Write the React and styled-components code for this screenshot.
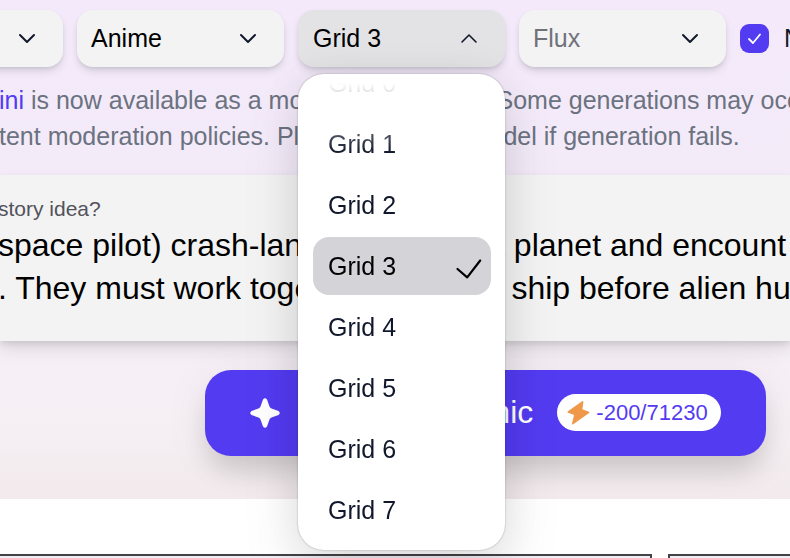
import { useEffect, useRef, useState } from 'react';
import styled, { createGlobalStyle } from 'styled-components';

const GlobalStyle = createGlobalStyle`
  *, *::before, *::after {
    box-sizing: border-box;
  }

  body {
    margin: 0;
    background: #FFFFFF;
    font-family: "Liberation Sans", Arial, Helvetica, sans-serif;
    overflow: hidden;
  }

  button, select, textarea {
    font-family: inherit;
  }
`;

const Page = styled.div`
  height: 100vh;
  display: flex;
  flex-direction: column;
  overflow: hidden;
`;

const Hero = styled.section`
  padding: 10px 0 43px;
  background: linear-gradient(180deg, #F3E9FA 0%, #F4EBF9 36%, #F6F0F5 82%, #F2EAEC 100%);
`;

const Toolbar = styled.div`
  display: flex;
  align-items: center;
  gap: 14px;
  margin-left: -144px;
`;

const Field = styled.div`
  position: relative;
  flex: 0 0 207px;
  color: #11182B;

  > svg {
    position: absolute;
    top: 17px;
    right: 25px;
    pointer-events: none;
  }
`;

const controlShadow = '0 5px 9px -1px rgba(0, 0, 0, 0.12), 0 2px 5px -2px rgba(0, 0, 0, 0.14)';

const Select = styled.select`
  appearance: none;
  display: block;
  width: 100%;
  height: 57px;
  padding: 0 14px 2px;
  border: 0;
  border-radius: 16px;
  background: #F3F3F3;
  box-shadow: ${controlShadow};
  color: ${props => props.$muted ? '#71717A' : '#000000'};
  font-size: 25px;
`;

const Trigger = styled.button`
  display: block;
  width: 100%;
  height: 57px;
  padding: 0 15px;
  border: 0;
  border-radius: 16px;
  background: #E3E3E5;
  box-shadow: ${controlShadow};
  color: #000000;
  font-size: 25px;
  text-align: left;
`;

const Menu = styled.div`
  position: absolute;
  top: 64px;
  left: 0;
  right: 0;
  z-index: 10;
  padding: 9px 14px 11px 15px;
  border-radius: 26px;
  background: #FFFFFF;
  box-shadow: 0 0 40px rgba(0, 0, 0, 0.07), 0 30px 60px rgba(0, 0, 0, 0.1), 0 0 2px rgba(0, 0, 0, 0.3);
`;

const Options = styled.div`
  display: flex;
  flex-direction: column;
  gap: 3px;
  height: 456px;
  overflow-y: auto;
  scrollbar-width: none;
  mask-image: linear-gradient(180deg, transparent 0, #000 70px);
`;

const Option = styled.button`
  flex: none;
  display: flex;
  align-items: center;
  justify-content: space-between;
  height: 58px;
  padding: 0 8px 0 15px;
  border: 0;
  border-radius: 16px;
  background: ${props => props.$active ? '#D4D4D8' : 'transparent'};
  color: ${props => props.$active ? '#000000' : '#11182B'};
  font-size: 25px;
`;

const CheckLabel = styled.label`
  display: flex;
  align-items: center;
  gap: 15px;
  color: #11182B;
  font-size: 25px;
`;

const CheckBox = styled.span`
  position: relative;
  display: grid;
  width: 29px;
  height: 29px;

  input {
    appearance: none;
    width: 29px;
    height: 29px;
    margin: 0;
    border-radius: 9px;
    background: #533BF1;
  }

  svg {
    position: absolute;
    inset: 0;
    pointer-events: none;
  }
`;

const Notice = styled.p`
  margin: 15px 0 21px -1px;
  color: #6B7280;
  font-size: 25px;
  line-height: 36px;
  white-space: nowrap;

  a {
    color: #533BF1;
    text-decoration: none;
  }
`;

const IdeaCard = styled.div`
  padding: 21px 0 30px;
  background: #F3F3F3;
  box-shadow: 0 9px 16px rgba(0, 0, 0, 0.09), 0 3px 6px rgba(0, 0, 0, 0.1);

  label {
    display: block;
    margin-left: -2px;
    color: #52525B;
    font-size: 21px;
    line-height: 26px;
  }

  textarea {
    display: block;
    width: calc(100% + 2px);
    height: 89px;
    margin-left: -2px;
    padding: 2px 0 0;
    border: 0;
    background: transparent;
    color: #000000;
    font-size: 32px;
    line-height: 43px;
    white-space: pre;
    overflow: hidden;
    resize: none;
    outline: none;
  }
`;

const Actions = styled.div`
  display: flex;
  justify-content: center;
  padding: 29px 0 0 181px;
`;

const GenerateButton = styled.button`
  display: flex;
  align-items: center;
  gap: 24px;
  padding: 24px 45px 25px;
  border: 0;
  border-radius: 26px;
  background: #533BF1;
  box-shadow: 0 18px 26px -4px rgba(0, 0, 0, 0.14), 0 6px 50px rgba(0, 0, 0, 0.06);
  color: #FFFFFF;
  font-size: 32px;
  white-space: nowrap;
`;

const ButtonLabel = styled.span`
  display: flex;
  align-items: center;
  gap: 20px;
`;

const Credits = styled.span`
  display: flex;
  align-items: center;
  gap: 6px;
  height: 37px;
  padding: 0 13px 0 10px;
  border-radius: 19px;
  background: #FFFFFF;
  color: #533BF1;
  font-size: 22px;
`;

const Panels = styled.div`
  display: flex;
  gap: 16px;
  padding-top: 55px;
`;

const Panel = styled.div`
  flex: ${props => props.$wide ? '1 0 0' : '0 0 122px'};
  height: 300px;
  border: 2px solid #434347;
  border-width: ${props => props.$wide ? '2px 2px 2px 0' : '2px 0 2px 2px'};
  background: #EFEDF5;
`;

const Chevron = ({ up }) => (
  <svg width="22" height="22" viewBox="0 0 22 22" fill="none" stroke="currentColor" strokeWidth={up ? 1.6 : 2} strokeLinecap="round" strokeLinejoin="round">
    <path d={up ? 'M4 15l7-7 7 7' : 'M4 8l7 7 7-7'} />
  </svg>
);

const grids = [0, 1, 2, 3, 4, 5, 6, 7].map(n => `Grid ${n}`);

const idea = `space pilot) crash-lands on a desert planet and encount
. They must work together to fix this ship before alien hu`;

const GridField = () => {
  const [value, setValue] = useState('Grid 3');
  const [open, setOpen] = useState(true);
  const listRef = useRef(null);

  useEffect(() => {
    if (open) {
      listRef.current.scrollTop = listRef.current.scrollHeight;
    }
  }, [open]);

  return (
    <Field>
      <Trigger type="button" aria-haspopup="listbox" aria-expanded={open} onClick={() => setOpen(!open)}>
        {value}
      </Trigger>
      <Chevron up={open} />
      {open && (
        <Menu>
          <Options ref={listRef} role="listbox" aria-label="Grid">
            {grids.map(name => (
              <Option
                key={name}
                type="button"
                role="option"
                aria-selected={name === value}
                $active={name === value}
                onClick={() => setValue(name)}
              >
                {name}
                {name === value && (
                  <svg width="28" height="28" viewBox="0 0 28 28" fill="none" stroke="currentColor" strokeWidth="2.2" strokeLinecap="round" strokeLinejoin="round">
                    <path d="M2.500 17l9.700 8.300L25.200 8.500" />
                  </svg>
                )}
              </Option>
            ))}
          </Options>
        </Menu>
      )}
    </Field>
  );
};

const App = () => {
  return (
    <>
      <GlobalStyle />
      <Page>
        <Hero>
          <Toolbar>
            <Field>
              <Select aria-label="Language">
                <option></option>
              </Select>
              <Chevron />
            </Field>
            <Field>
              <Select aria-label="Style">
                <option>Anime</option>
              </Select>
              <Chevron />
            </Field>
            <GridField />
            <Field>
              <Select aria-label="Model" $muted>
                <option>Flux</option>
              </Select>
              <Chevron />
            </Field>
            <CheckLabel>
              <CheckBox>
                <input type="checkbox" defaultChecked />
                <svg viewBox="0 0 29 29" fill="none" stroke="#FFFFFF" strokeWidth="1.8" strokeLinecap="round" strokeLinejoin="round">
                  <path d="M9 15l4 4 7-8.500" />
                </svg>
              </CheckBox>
              N
            </CheckLabel>
          </Toolbar>

          <Notice>
            <a href="#mini">ini</a> is now available as a model for everyone. Some generations may occur
            <br />
            tent moderation policies. Please try a new model if generation fails.
          </Notice>

          <IdeaCard>
            <label htmlFor="idea">story idea?</label>
            <textarea id="idea" defaultValue={idea} />
          </IdeaCard>

          <Actions>
            <GenerateButton type="button">
              <ButtonLabel>
                <svg width="30" height="30" viewBox="0 0 30 30" fill="#FFFFFF">
                  <path d="M13 1.500q2-2.500 4 0l2.500 7q.6 1.500 2 2l7 2.500q2.500 2 0 4l-7 2.500q-1.400.500-2 2l-2.500 7q-2 2.500-4 0l-2.500-7q-.6-1.500-2-2l-7-2.500q-2.500-2 0-4l7-2.500q1.400-.5 2-2z" />
                </svg>
                Generate Comic
              </ButtonLabel>
              <Credits>
                <svg width="23" height="25" viewBox="0 0 23 25" fill="#F0984A" stroke="#F0984A" strokeWidth="1.6" strokeLinejoin="round">
                  <path d="M15.600 1.800L1.400 12L8 14.400L5.800 23.600L21.600 12.400L14.500 9.800z" />
                </svg>
                -200/71230
              </Credits>
            </GenerateButton>
          </Actions>
        </Hero>

        <Panels>
          <Panel $wide />
          <Panel />
        </Panels>
      </Page>
    </>
  );
};

export default App;
